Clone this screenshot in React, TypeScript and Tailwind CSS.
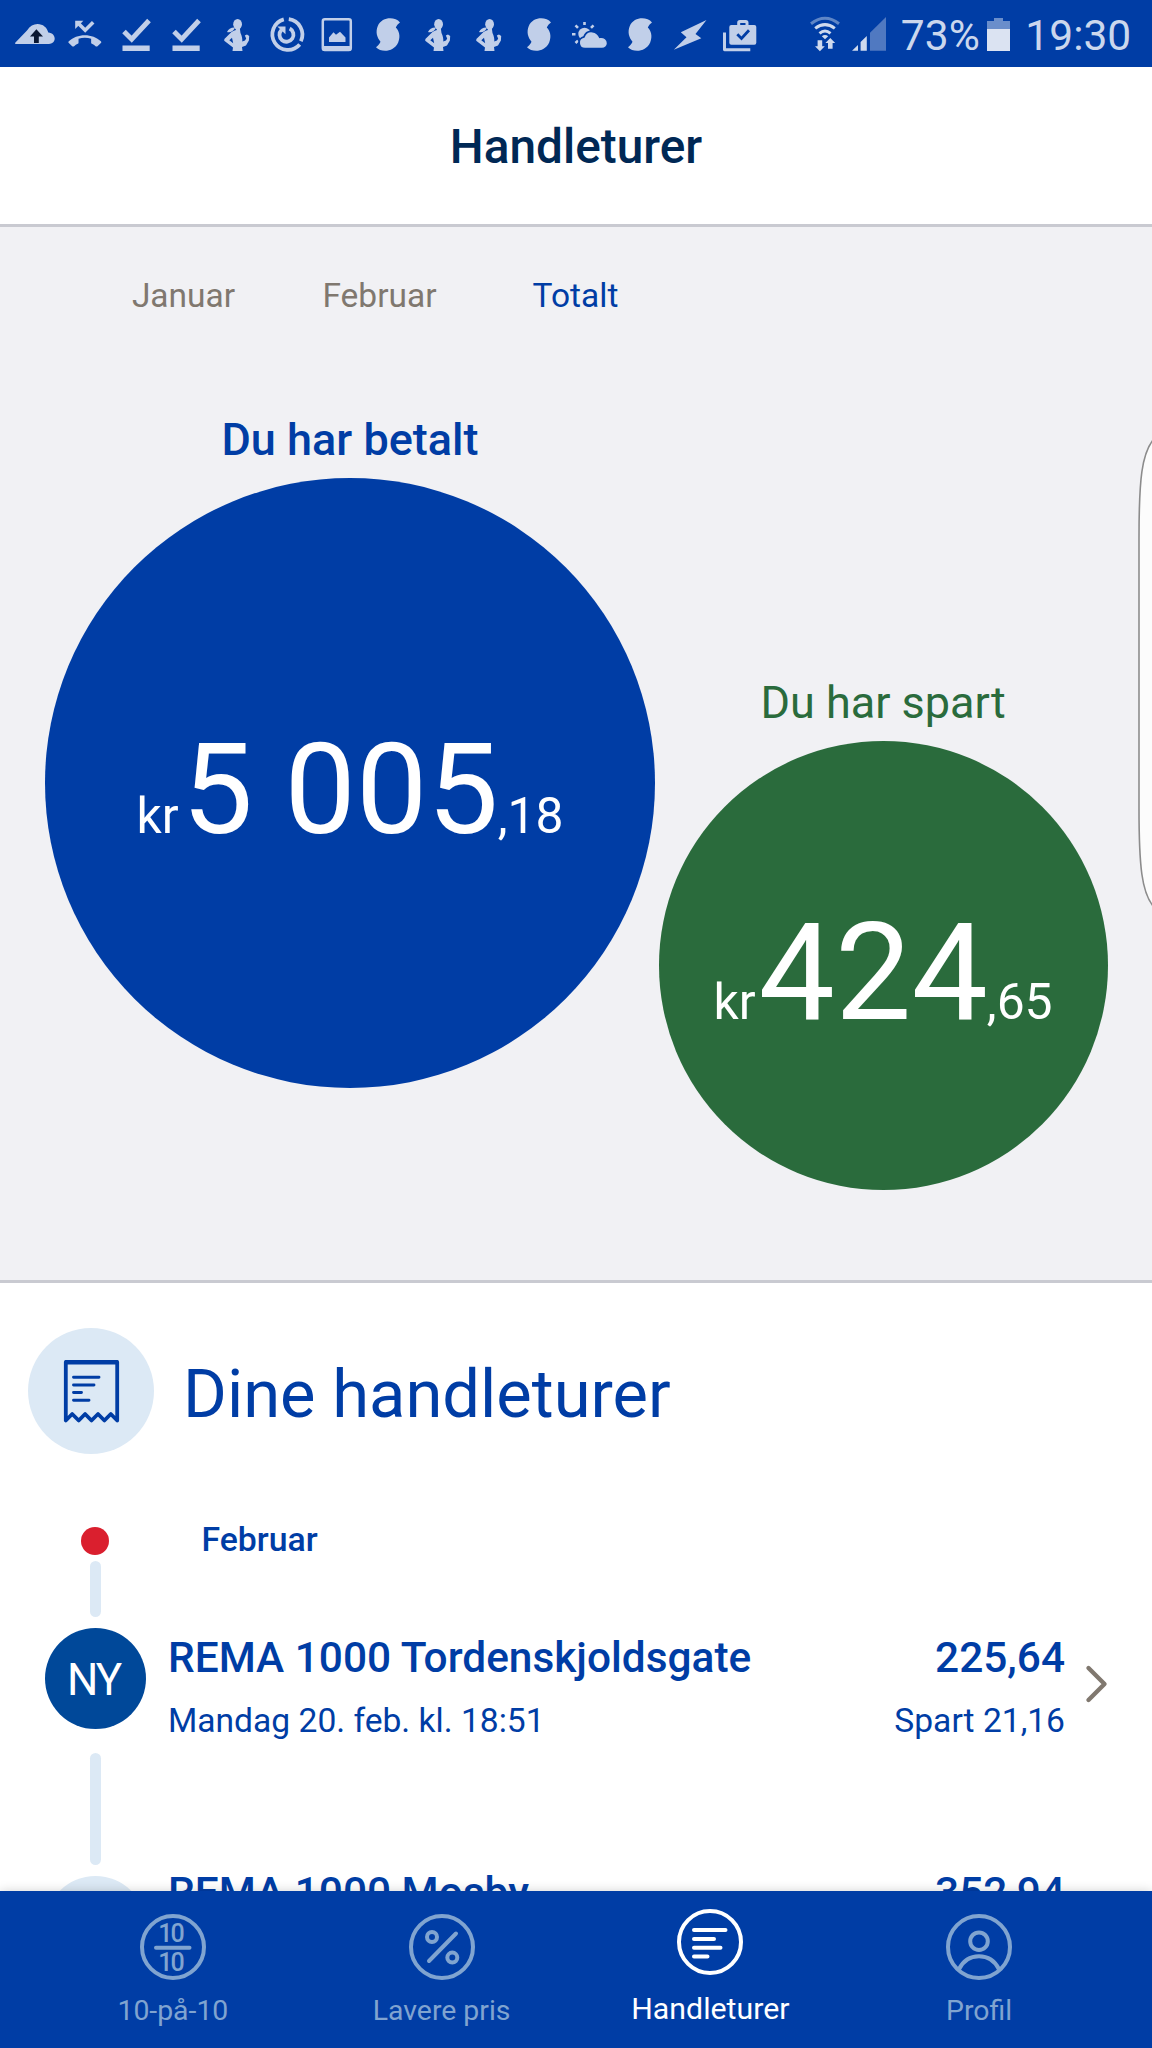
import React from 'react';

interface Trip {
    badge: string;
    store: string;
    date: string;
    amount: string;
    saved: string;
}

const MONTHS = ['Januar', 'Februar', 'Totalt'];

// Every status icon is drawn in a 50x67 cell
const Cell: React.FC<{ children: React.ReactNode }> = ({ children }) => (
    <svg viewBox="0 0 50.4 67" className="h-[67px] w-[50.4px] shrink-0 text-[#c1cfe9]" fill="currentColor">
        {children}
    </svg>
);

const CloudUpload = () => (
    <Cell>
        <path d="M5.2 44 L5.2 42.8 L17 30.5 C20 26 23.5 24 27.5 24 C33 24 37 27.5 38.3 32.5 C42.5 32.8 44.7 35.5 44.7 38.6 C44.7 42 42 44 39 44 Z" />
        <path d="M26.4 29.3 L33 36.5 H28.8 V43 H24 V36.5 H20 Z" fill="#0a1733" />
    </Cell>
);

const MissedCall = () => (
    <Cell>
        <path d="M15.2 20.7 H23.4 L15.2 28.9 Z" />
        <path d="M18 23 L25.2 30.2 L33.2 22.2" fill="none" stroke="currentColor" strokeWidth="3.6" />
        <g transform="translate(8.4 19.9) scale(1.37 1.28)">
            <path d="M23.71 16.67C20.66 13.78 16.54 12 12 12S3.34 13.78.29 16.67c-.18.18-.29.43-.29.71s.11.53.29.71l2.48 2.48c.18.18.43.29.71.29.27 0 .52-.11.7-.28.79-.74 1.69-1.36 2.66-1.85.33-.16.56-.5.56-.9v-3.1c1.45-.48 3-.73 4.6-.73s3.15.25 4.6.72v3.1c0 .39.23.74.56.9.98.49 1.87 1.12 2.67 1.85.18.18.43.28.7.28.28 0 .53-.11.71-.29l2.48-2.48c.18-.18.29-.43.29-.71s-.12-.52-.3-.7z" />
        </g>
    </Cell>
);

const DownloadDone = () => (
    <Cell>
        <path d="M13 31.5 L20.7 39.2 L38 20.5" fill="none" stroke="currentColor" strokeWidth="5" />
        <rect x="11.5" y="45.5" width="27.2" height="5.5" />
    </Cell>
);

const Runner = () => (
    <Cell>
        <ellipse cx="25.6" cy="24.3" rx="4.4" ry="5.3" />
        <path d="M23 27 L27.8 28 L28.5 33 C30 36 30.5 39 30.3 41.5 L33 40.5 L34.2 38.5 L32.8 35.5 L35 34.5 L37.2 36 L36.9 40.5 L34 45.5 L30 47 L30.5 51 H20.5 L21 47.5 L12.2 40.8 L12.4 39 L19.5 32 C21 31 22.5 30.5 24 30 Z" />
        <path d="M15 32 C16 29 19.5 27.2 23 27.5 C22 31 18 33 15 32 Z" />
        <path d="M17.3 40.3 L20 37.7 L21.2 43.3 Z" fill="#003da5" />
    </Cell>
);

const DataUsage = () => (
    <Cell>
        <g fill="none" stroke="currentColor" strokeWidth="3.8">
            <path d="M21.8 19.4 A15.5 15.5 0 1 0 37.7 44.4" />
            <path d="M26.8 19.2 A15.5 15.5 0 0 1 38.9 41.2" />
            <path d="M27.7 28.5 A7 7 0 1 1 19.5 29.8" />
        </g>
        <path d="M15.3 26.5 H23.5 V34.2 Z" />
    </Cell>
);

const Picture = () => (
    <Cell>
        <rect x="10.8" y="19.3" width="28" height="30.8" rx="2" fill="none" stroke="currentColor" strokeWidth="2.5" />
        <rect x="10.5" y="46" width="28.5" height="5" rx="1.5" />
        <path d="M17 42 V37.5 L21.5 32.2 L24 34.8 L28 31.8 L33.5 37.5 V42 Z" />
    </Cell>
);

const Shazam = () => (
    <Cell>
        <path d="M37 22.5 C32 16.5 19 16.5 14.8 26 C12.2 32.5 14.2 37.5 17.5 41.7 C16.5 44.5 14.5 46 13 47.2 C18.5 53 31 52 35.2 42.5 C37.8 36 36 31 32.8 27.6 C33.8 25 35.4 23.8 37 22.5 Z" />
    </Cell>
);

const PartlyCloudy = () => (
    <Cell>
        <circle cx="20.5" cy="34" r="6.2" />
        <path
            d="M20.5 22 V25 M11.5 25.3 L14 27.8 M8 34.3 H11.5 M11.5 43 L14 40.6 M29.5 25.3 L27 27.8"
            stroke="currentColor"
            strokeWidth="2.6"
        />
        <path
            d="M21 48.7 A6 6 0 0 1 20 36.8 C21.5 32.5 25 31 28.5 31.5 C32 32 34.6 34 35.8 37.2 C40.5 36.6 43.7 39.5 43.7 43.2 C43.7 46.5 41 48.7 38 48.7 Z"
            stroke="#003da5"
            strokeWidth="1.8"
        />
    </Cell>
);

const Bolt = () => (
    <Cell>
        <path d="M41.5 20 L15.8 32.3 L21.5 37.3 L8.8 49.8 L36.3 38.2 L30.5 34 Z" />
    </Cell>
);

const WorkBag = () => (
    <Cell>
        <path d="M9.5 32.5 V49.8 H35.3" fill="none" stroke="currentColor" strokeWidth="3" strokeLinejoin="round" />
        <path d="M23.7 26 V22.7 Q23.7 21.5 25 21.5 H30.8 Q32 21.5 32 22.7 V26" fill="none" stroke="currentColor" strokeWidth="3" />
        <rect x="14.3" y="25" width="27" height="19.8" rx="2" />
        <path d="M22.3 34.3 L26.5 38.4 L34 30.3" fill="none" stroke="#003da5" strokeWidth="2.8" />
    </Cell>
);

const Wifi = () => (
    <svg viewBox="0 0 32 67" className="h-[67px] w-8 shrink-0 text-[#cfdaee]">
        <g fill="none" stroke="currentColor" strokeWidth="3">
            <path d="M2 23.8 Q16 12.8 30 23.8" stroke="#5f86c6" />
            <path d="M6.2 28.4 Q16 20.8 25.8 28.4" />
            <path d="M10.5 33.3 Q16 28.8 21.5 33.3" />
        </g>
        <path d="M12.8 36.3 Q16 33.6 19.2 36.3 L16 39.3 Z" fill="currentColor" />
        <path d="M8.6 40.3 H13.2 V46.3 H15.8 L10.9 51.2 L6 46.3 H8.6 Z M19 48.7 H23.6 V43 H26.2 L21.3 38 L16.4 43 H19 Z" fill="currentColor" />
    </svg>
);

const Signal = () => (
    <svg viewBox="0 0 34 67" className="h-[67px] w-[34px] shrink-0">
        <path d="M0 50.8 L6 45 V50.8 Z M8.6 50.8 V42 L14.8 36 V50.8 Z" fill="#cfdaee" />
        <path d="M18 50.8 V32.8 L34 17 V50.8 Z" fill="#5079c1" />
    </svg>
);

const Battery = () => (
    <svg viewBox="0 0 23 67" className="h-[67px] w-[23px] shrink-0">
        <path d="M0 21 H7 V18 H16 V21 H23 V29 H0 Z" fill="#6a8ecb" />
        <path d="M0 29 H23 V51 H0 Z" fill="#dbe3f2" />
    </svg>
);

const StatusBar = () => (
    <div className="flex h-[67px] shrink-0 items-center bg-[#003da5] pl-2.5 text-[42.5px] text-[#cbd7ed]">
        <CloudUpload />
        <MissedCall />
        <DownloadDone />
        <DownloadDone />
        <Runner />
        <DataUsage />
        <Picture />
        <Shazam />
        <Runner />
        <Runner />
        <Shazam />
        <PartlyCloudy />
        <Shazam />
        <Bolt />
        <WorkBag />
        <div className="ml-[43px] flex items-center">
            <Wifi />
            <div className="w-[11px]" />
            <Signal />
            <span className="ml-[15px] w-[86.5px] pt-[5px] leading-[62px]">73%</span>
            <Battery />
            <span className="ml-[15px] pt-[5px] leading-[62px]">19:30</span>
        </div>
    </div>
);

const ReceiptIcon = () => (
    <svg viewBox="0 0 126 126" className="size-[126px]" fill="none" stroke="#003da5" strokeWidth="3.8">
        <path d="M37.8 92.5 V34 H89.2 V92.5 L82.8 86 L76.4 92.5 L70 86 L63.5 92.5 L57.1 86 L50.7 92.5 L44.2 86 Z" strokeLinejoin="round" />
        <path d="M37 34.4 H90" strokeWidth="4.4" />
        <path d="M45.5 49.3 H71 M45.5 57 H66 M45.5 64.5 H53.5 M45.5 72.2 H61" strokeWidth="2.9" strokeLinecap="round" />
    </svg>
);

const Bar: React.FC<{ className: string }> = ({ className }) => (
    <div className={`ml-[89.5px] w-[11px] rounded-full bg-[#dce9f5] ${className}`} />
);

const TripRow: React.FC<{ trip: Trip; offset: string; circle: string }> = ({ trip, offset, circle }) => (
    <div className="flex h-[125px] shrink-0 items-start pl-[45px] text-[#003da5]">
        <div className={`flex size-[101px] shrink-0 items-center justify-center rounded-full pt-0.5 pr-1 text-[44px] tracking-[-2px] text-white ${circle}`}>
            {trip.badge}
        </div>
        <div className={`ml-[22px] flex-1 ${offset}`}>
            <div className="flex h-[50px] justify-between text-[42.4px] leading-[50px] font-medium whitespace-nowrap">
                <span>{trip.store}</span>
                <span>{trip.amount}</span>
            </div>
            <div className="mt-[15.5px] flex justify-between text-[33.6px] leading-[44px] whitespace-nowrap">
                <span>{trip.date}</span>
                <span>{trip.saved}</span>
            </div>
        </div>
        <svg viewBox="0 0 24 42" className="mt-[35px] mr-[44px] ml-[19px] h-[42px] w-6" fill="none" stroke="#80786f" strokeWidth="4.4" strokeLinecap="round">
            <path d="M4.5 5 L20.5 21 L4.5 37" strokeLinejoin="round" />
        </svg>
    </div>
);

const NAV = [
    {
        label: '10-på-10',
        icon: (
            <>
                <g fill="currentColor" stroke="none" fontSize="25" fontWeight="500" letterSpacing="-2" textAnchor="middle">
                    <text x="30.5" y="27.7">10</text>
                    <text x="30.5" y="57.3">10</text>
                </g>
                <path d="M16 33.8 H49.5" />
            </>
        ),
    },
    {
        label: 'Lavere pris',
        icon: (
            <>
                <circle cx="23" cy="23" r="5" />
                <circle cx="43.3" cy="43.6" r="5" />
                <path d="M47 19.5 L20 47" />
            </>
        ),
    },
    {
        label: 'Handleturer',
        active: true,
        icon: <path d="M17 21 H48.5 M17 30 H37 M17 38.8 H43.5 M17 47.5 H30.5" />,
    },
    {
        label: 'Profil',
        icon: (
            <>
                <circle cx="33" cy="27.2" r="8.8" />
                <path d="M12.8 55.5 C17 47 24 42.3 33 42.3 S49 47 53.2 55.5" />
            </>
        ),
    },
];

const BottomNav = () => (
    <nav className="z-10 flex h-[157px] shrink-0 bg-[#003da5] px-[38.5px] shadow-[0_0_10px_rgba(0,0,0,0.18)]">
        {NAV.map((item) => (
            <div
                key={item.label}
                className={
                    item.active
                        ? 'flex flex-1 flex-col items-center pt-[17.5px] text-[30.3px] text-white'
                        : 'flex flex-1 flex-col items-center pt-[23px] text-[28.4px] text-[#80a4d0]'
                }
            >
                <svg viewBox="0 0 66 66" className="size-[66px]" fill="none" stroke="currentColor" strokeWidth="4" strokeLinecap="round">
                    <circle cx="33" cy="33" r="31" />
                    {item.icon}
                </svg>
                <span className={item.active ? 'mt-[16.5px] leading-9' : 'mt-[13px] leading-9'}>{item.label}</span>
            </div>
        ))}
    </nav>
);

export default function App() {
    return (
        <div className="relative flex h-[2048px] w-[1152px] flex-col overflow-hidden bg-white font-['Roboto',sans-serif]">
            <StatusBar />

            <header className="flex h-[160px] shrink-0 items-center justify-center border-b-[3px] border-[#c9cad1] pt-[5px]">
                <h1 className="text-[47.8px] font-medium text-[#002855]">Handleturer</h1>
            </header>

            <section className="h-[1056px] shrink-0 border-b-[3px] border-[#c9cad1] bg-[#f1f1f4]">
                <div className="flex pt-[39px] pl-[85.5px] text-[33.5px] leading-[60px]">
                    {MONTHS.map((m) => (
                        <span key={m} className={m === 'Totalt' ? 'w-[196px] text-center text-[#003da5]' : 'w-[196px] text-center text-[#80786f]'}>
                            {m}
                        </span>
                    ))}
                </div>
                <div className="flex items-start pl-[45px]">
                    <div className="mt-[84px] w-[610px] text-center">
                        <h2 className="h-[68px] text-[45px] leading-[60px] font-medium text-[#003da5]">Du har betalt</h2>
                        <div className="flex size-[610px] items-center justify-center rounded-full bg-[#003da5] pt-3 text-white">
                            <p className="flex items-baseline text-[49.8px] leading-none">
                                <span>kr</span>
                                <span className="ml-[3px] text-[127px] leading-none">5 005</span>
                                <span className="-ml-px">,18</span>
                            </p>
                        </div>
                    </div>
                    <div className="mt-[347px] ml-[3.5px] w-[449px] text-center">
                        <h2 className="h-[68px] text-[45px] leading-[60px] text-[#2a6b3c]">Du har spart</h2>
                        <div className="flex size-[449px] items-center justify-center rounded-full bg-[#2a6b3c] pt-[15px] text-white">
                            <p className="flex items-baseline text-[49.8px] leading-none">
                                <span>kr</span>
                                <span className="ml-[3px] text-[136px] leading-none">424</span>
                                <span className="-ml-px">,65</span>
                            </p>
                        </div>
                    </div>
                </div>
            </section>

            <section className="flex min-h-0 flex-1 flex-col overflow-hidden">
                <div className="mt-[45px] flex h-[126px] shrink-0 items-center pl-7">
                    <div className="size-[126px] rounded-full bg-[#dce9f5]">
                        <ReceiptIcon />
                    </div>
                    <h2 className="mt-[6px] ml-[29px] text-[66.9px] leading-[80px] text-[#003da5]">Dine handleturer</h2>
                </div>

                <div className="mt-[73px] flex h-7 shrink-0 items-center pl-[81px]">
                    <div className="size-7 rounded-full bg-[#da1f2e]" />
                    <h3 className="-mt-[3px] ml-[92.5px] text-[33.8px] leading-[44px] font-medium text-[#003da5]">Februar</h3>
                </div>
                <Bar className="mt-1.5 mb-[11px] h-14 shrink-0" />
                <TripRow
                    trip={{ badge: 'NY', store: 'REMA 1000 Tordenskjoldsgate', date: 'Mandag 20. feb. kl. 18:51', amount: '225,64', saved: 'Spart 21,16' }}
                    offset="mt-[5px]"
                    circle="bg-[#004899]"
                />
                <Bar className="mb-[11px] h-28 shrink-0" />
                <TripRow
                    trip={{ badge: '', store: 'REMA 1000 Mosby', date: '', amount: '352,94', saved: '' }}
                    offset="-mt-2"
                    circle="bg-[#dce9f5]"
                />
            </section>

            <BottomNav />

            {/* Edge panel handle hanging over the right side */}
            <svg viewBox="0 0 15 470" className="absolute top-[438px] right-0 h-[470px] w-[15px]">
                <path d="M16 2 C5 16 2 40 2 100 V370 C2 430 5 454 16 468 Z" fill="#fcfcfc" stroke="#8c8c8c" strokeWidth="1.6" />
            </svg>
        </div>
    );
}
